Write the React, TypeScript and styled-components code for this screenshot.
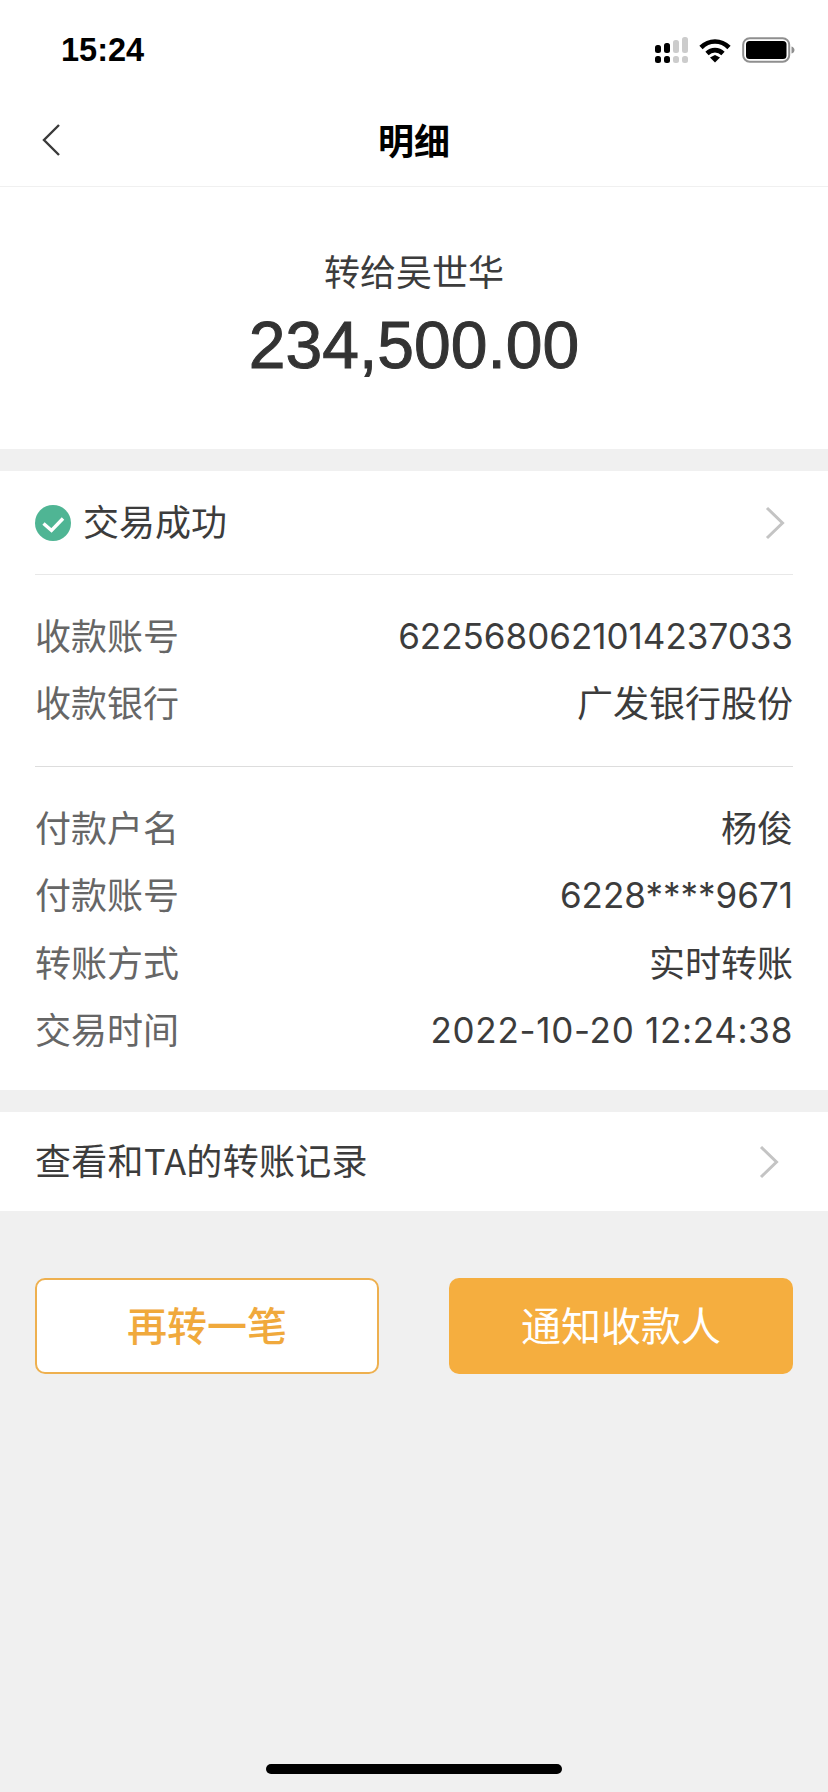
import React from 'react';
import styled, {createGlobalStyle} from 'styled-components';

const cjk = `"Noto Sans CJK SC", "Liberation Sans", sans-serif`;

const GlobalStyle = createGlobalStyle`
    html, body {
        margin: 0;
        padding: 0;
        background: #f0f0f0;
    }
    body {
        font-family: ${cjk};
    }
`

type ValueKind = 'text' | 'number' | 'date'

type RowType = {
    label: string
    value: string
    kind: ValueKind
}

const bankRows: RowType[] = [
    {label: '收款账号', value: '6225680621014237033', kind: 'number'},
    {label: '收款银行', value: '广发银行股份', kind: 'text'},
]

const payRows: RowType[] = [
    {label: '付款户名', value: '杨俊', kind: 'text'},
    {label: '付款账号', value: '6228****9671', kind: 'number'},
    {label: '转账方式', value: '实时转账', kind: 'text'},
    {label: '交易时间', value: '2022-10-20 12:24:38', kind: 'date'},
]

const SignalIcon = () => (
    <svg width="33" height="26" viewBox="0 0 33 26">
        <rect x="0" y="8" width="6" height="8" rx="2.500" fill="#000"/>
        <rect x="9" y="6" width="6" height="10" rx="2.500" fill="#000"/>
        <rect x="0" y="19" width="6" height="7" rx="2.500" fill="#000"/>
        <rect x="9" y="19" width="6" height="7" rx="2.500" fill="#000"/>
        <rect x="18" y="3" width="6" height="13" rx="2.500" fill="#ccc"/>
        <rect x="27" y="0" width="6" height="16" rx="2.500" fill="#ccc"/>
        <rect x="18" y="19" width="6" height="7" rx="2.500" fill="#ccc"/>
        <rect x="27" y="19" width="6" height="7" rx="2.500" fill="#ccc"/>
    </svg>
)

const WifiIcon = () => (
    <svg width="32" height="25" viewBox="0 0 32 25">
        <path d="M2 9.500C10 1.500 22 1.500 30 9.500" fill="none" stroke="#000" strokeWidth="4.600"/>
        <path d="M8 15.500C12.500 11 19.500 11 24 15.500" fill="none" stroke="#000" strokeWidth="4.600"/>
        <path d="M11 19.500L16 17L21 19.500L16 24.500Z" fill="#000"/>
    </svg>
)

const BatteryIcon = () => (
    <svg width="53" height="26" viewBox="0 0 53 26">
        <rect x="1.200" y="1.200" width="46" height="23.500" rx="6.500" fill="none" stroke="#8f8f8f" strokeWidth="2"/>
        <rect x="4" y="4" width="40.500" height="18" rx="3.500" fill="#000"/>
        <path d="M49.500 9.500C51.500 10 52.500 11.500 52.500 13C52.500 14.500 51.500 16 49.500 16.500Z" fill="#8f8f8f"/>
    </svg>
)

const BackIcon = () => (
    <svg width="18" height="32" viewBox="0 0 18 32">
        <path d="M17 1L2 16L17 31" fill="none" stroke="#3a3a3a" strokeWidth="2.400"/>
    </svg>
)

const ChevronIcon = () => (
    <svg width="20" height="34" viewBox="0 0 20 34">
        <path d="M2 2L17.500 17L2 32" fill="none" stroke="#c4c4c4" strokeWidth="3"/>
    </svg>
)

const CheckBadge = () => (
    <svg width="36" height="36" viewBox="0 0 36 36">
        <circle cx="18" cy="18" r="18" fill="#4fb594"/>
        <path d="M8.500 18.500L16.500 25.500L28 13.500" fill="none" stroke="#fff" strokeWidth="3.400"/>
    </svg>
)

const InfoRow = ({label, value, kind}: RowType) => (
    <Row>
        <Label>{label}</Label>
        {kind === 'text' ? <Value>{value}</Value> : <NumberValue $kind={kind}>{value}</NumberValue>}
    </Row>
)

export default function App() {
    return (
        <>
            <GlobalStyle/>
            <Page>
                <StatusBar>
                    <Clock>15:24</Clock>
                    <StatusIcons>
                        <SignalIcon/>
                        <WifiIcon/>
                        <BatteryIcon/>
                    </StatusIcons>
                </StatusBar>
                <NavBar>
                    <BackButton><BackIcon/></BackButton>
                    <NavTitle>明细</NavTitle>
                </NavBar>
                <Hero>
                    <HeroLabel>转给吴世华</HeroLabel>
                    <Amount>234,500.00</Amount>
                </Hero>
                <Card>
                    <StatusRow>
                        <StatusText>
                            <CheckBadge/>
                            <StatusLabel>交易成功</StatusLabel>
                        </StatusText>
                        <ChevronIcon/>
                    </StatusRow>
                    <Group>
                        {bankRows.map(r => <InfoRow key={r.label} {...r}/>)}
                    </Group>
                    <PayGroup>
                        {payRows.map(r => <InfoRow key={r.label} {...r}/>)}
                    </PayGroup>
                </Card>
                <RecordRow>
                    <RecordText>查看和TA的转账记录</RecordText>
                    <ChevronIcon/>
                </RecordRow>
                <Buttons>
                    <OutlineButton>再转一笔</OutlineButton>
                    <FilledButton>通知收款人</FilledButton>
                </Buttons>
                <HomeBar/>
            </Page>
        </>
    );
}

const Page = styled.div`
    position: relative;
    width: 828px;
    height: 1792px;
    overflow: hidden;
    background: #f0f0f0;
    display: flex;
    flex-direction: column;
`

const StatusBar = styled.div`
    height: 92px;
    flex-shrink: 0;
    background: #fff;
    display: flex;
    justify-content: space-between;
    align-items: center;
    padding: 8px 33px 0 61px;
    box-sizing: border-box;
`

const Clock = styled.span`
    font-family: "Liberation Sans", sans-serif;
    font-size: 32.500px;
    font-weight: 700;
    line-height: 36px;
    color: #000;
`

const StatusIcons = styled.div`
    display: flex;
    align-items: center;
    gap: 11px;
`

const NavBar = styled.div`
    height: 94px;
    flex-shrink: 0;
    background: #fff;
    border-bottom: 1px solid #f0f0f0;
    display: flex;
    align-items: center;
    justify-content: center;
    position: relative;
`

const BackButton = styled.div`
    position: absolute;
    left: 42px;
    top: 32px;
    display: flex;
`

const NavTitle = styled.div`
    font-size: 36px;
    font-weight: 700;
    color: #000;
    line-height: 50px;
`

const Hero = styled.div`
    height: 262px;
    flex-shrink: 0;
    background: #fff;
    display: flex;
    flex-direction: column;
    align-items: center;
    padding-top: 61px;
    box-sizing: border-box;
`

const HeroLabel = styled.div`
    font-size: 36px;
    line-height: 44px;
    color: #3c3c3c;
`

const Amount = styled.div`
    font-family: "Liberation Sans", sans-serif;
    font-size: 66px;
    line-height: 80px;
    font-weight: 500;
    color: #333;
    -webkit-text-stroke: 1px #333;
    margin-top: 13px;
`

const Card = styled.div`
    margin-top: 22px;
    height: 619px;
    flex-shrink: 0;
    box-sizing: border-box;
    background: #fff;
    padding: 0 35px;
`

const StatusRow = styled.div`
    height: 103px;
    display: flex;
    align-items: center;
    justify-content: space-between;
    border-bottom: 1px solid #e8e8e8;
    padding-right: 8px;
`

const StatusText = styled.div`
    display: flex;
    align-items: center;
    gap: 12px;
`

const StatusLabel = styled.span`
    font-size: 36px;
    line-height: 48px;
    color: #3c3c3c;
    margin-top: -6px;
`

const Group = styled.div`
    display: flex;
    flex-direction: column;
    padding-top: 28px;
    height: 192px;
    box-sizing: border-box;
    border-bottom: 1px solid #ddd;
`

const PayGroup = styled(Group)`
    border-bottom: none;
    height: auto;
`

const Row = styled.div`
    display: flex;
    justify-content: space-between;
    align-items: center;
    height: 67.500px;
    flex-shrink: 0;
`

const Label = styled.span`
    font-size: 36px;
    line-height: 48px;
    color: #666;
    margin-top: -6px;
`

const Value = styled.span`
    font-size: 36px;
    line-height: 48px;
    color: #3c3c3c;
    margin-top: -6px;
`

const NumberValue = styled.span<{$kind: ValueKind}>`
    font-family: Inter, "Liberation Sans", sans-serif;
    font-size: 35px;
    line-height: 48px;
    letter-spacing: ${props => props.$kind === 'date' ? '0.700px' : '0'};
    color: #3c3c3c;
    margin-top: -2px;
`

const RecordRow = styled.div`
    margin-top: 22px;
    height: 99px;
    flex-shrink: 0;
    box-sizing: border-box;
    background: #fff;
    padding: 0 49px 0 35px;
    display: flex;
    align-items: center;
    justify-content: space-between;
`

const RecordText = styled.span`
    font-size: 36px;
    line-height: 48px;
    letter-spacing: 0.300px;
    color: #3c3c3c;
    margin-top: -6px;
`

const Buttons = styled.div`
    display: flex;
    justify-content: space-between;
    padding: 67px 35px 0;
`

const OutlineButton = styled.div`
    width: 344px;
    height: 96px;
    box-sizing: border-box;
    border: 2px solid #eeb04f;
    border-radius: 10px;
    background: #fff;
    color: #f0a93c;
    font-size: 40px;
    font-weight: 500;
    padding-bottom: 4px;
    display: flex;
    align-items: center;
    justify-content: center;
`

const FilledButton = styled.div`
    width: 344px;
    height: 96px;
    box-sizing: border-box;
    border-radius: 10px;
    background: #f5ae3f;
    color: #fff;
    font-size: 40px;
    padding-bottom: 4px;
    display: flex;
    align-items: center;
    justify-content: center;
`

const HomeBar = styled.div`
    position: absolute;
    left: 266px;
    top: 1764px;
    width: 296px;
    height: 10px;
    border-radius: 5px;
    background: #000;
`
